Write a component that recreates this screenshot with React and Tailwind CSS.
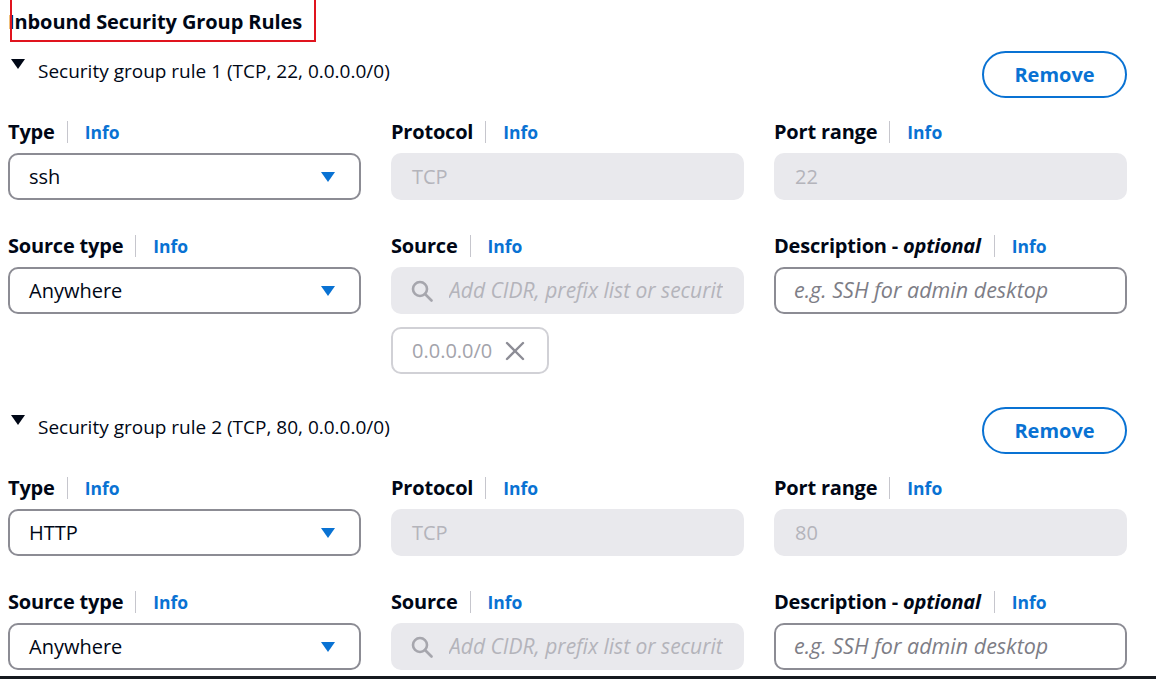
import React from 'react';

const Label = ({ children }) => (
  <div className="flex items-center h-[24px]">
    <span className="text-[20px] font-bold text-[#000716] leading-[24px] tracking-[-0.2px]">{children}</span>
    <span className="ml-[12px] mr-[17px] h-[22px] w-px bg-[#c6c6cd]"></span>
    <span className="text-[17.5px] font-bold text-[#0972d3]">Info</span>
  </div>
);

const Caret = () => (
  <svg width="14" height="10" viewBox="0 0 14 10" className="shrink-0">
    <path d="M0 0h14L7 10z" fill="#0972d3" />
  </svg>
);

const SelectBox = ({ value }) => (
  <div className="mt-[9px] h-[47px] rounded-[10px] border-2 border-[#8c8c94] bg-white flex items-center justify-between pl-[19px] pr-[24px]">
    <span className="text-[20px] text-[#000716]">{value}</span>
    <Caret />
  </div>
);

const DisabledBox = ({ value }) => (
  <div className="mt-[9px] h-[47px] rounded-[10px] bg-[#e9e9ed] flex items-center pl-[21px]">
    <span className="text-[20px] text-[#b4b4bb]">{value}</span>
  </div>
);

const SearchBox = () => (
  <div className="mt-[9px] h-[47px] rounded-[10px] bg-[#e9e9ed] flex items-center pl-[20px] pr-[14px]">
    <svg width="22" height="22" viewBox="0 0 22 22" className="shrink-0" fill="none" stroke="#a6a6ad" strokeWidth="2.6">
      <circle cx="9" cy="9" r="7" />
      <path d="M14 14l6.5 6.5" strokeLinecap="round" />
    </svg>
    <span className="ml-[16px] text-[21px] italic text-[#b4b4bb] whitespace-nowrap overflow-hidden">
      Add CIDR, prefix list or securit
    </span>
  </div>
);

const TextBox = () => (
  <div className="mt-[9px] h-[47px] rounded-[10px] border-2 border-[#8c8c94] bg-white flex items-center pl-[18px]">
    <span className="text-[21.5px] italic text-[#7d7d86]">e.g. SSH for admin desktop</span>
  </div>
);

const Rule = ({ n, type, port, chip, mt }) => (
  <div className={mt}>
    <div className="flex items-start justify-between w-[1119px]">
      <div className="flex items-start pt-[7px]">
        <svg width="14" height="10" viewBox="0 0 14 10" className="ml-[3px] mt-[1px]">
          <path d="M0 0h14L7 10z" fill="#000716" />
        </svg>
        <span className="ml-[13px] text-[19px] leading-[26px] text-[#000716]">
          Security group rule {n} (TCP, {port}, 0.0.0.0/0)
        </span>
      </div>
      <button className="w-[145px] h-[47px] rounded-full border-2 border-[#0972d3] text-[#0972d3] text-[20px] font-bold bg-white">
        Remove
      </button>
    </div>

    <div className="grid grid-cols-[353px_353px_353px] gap-x-[30px] mt-[22px]">
      <div>
        <Label>Type</Label>
        <SelectBox value={type} />
      </div>
      <div>
        <Label>Protocol</Label>
        <DisabledBox value="TCP" />
      </div>
      <div>
        <Label>Port range</Label>
        <DisabledBox value={port} />
      </div>
    </div>

    <div className="grid grid-cols-[353px_353px_353px] gap-x-[30px] mt-[34px]">
      <div>
        <Label>Source type</Label>
        <SelectBox value="Anywhere" />
      </div>
      <div>
        <Label>Source</Label>
        <SearchBox />
        {chip && (
          <div className="mt-[13px] w-[158px] h-[47px] rounded-[10px] border-2 border-[#d1d1d6] flex items-center pl-[19px]">
            <span className="text-[20px] text-[#a3a3ab]">0.0.0.0/0</span>
            <svg width="20" height="20" viewBox="0 0 20 20" className="ml-[13px]" stroke="#8d8d96" strokeWidth="2.4" strokeLinecap="round">
              <path d="M2 2l16 16M18 2L2 18" />
            </svg>
          </div>
        )}
      </div>
      <div>
        <div className="flex items-center h-[24px]">
          <span className="text-[20px] font-bold text-[#000716] tracking-[-0.2px]">
            Description - <i>optional</i>
          </span>
          <span className="ml-[13px] mr-[17px] h-[22px] w-px bg-[#c6c6cd]"></span>
          <span className="text-[17.5px] font-bold text-[#0972d3]">Info</span>
        </div>
        <TextBox />
      </div>
    </div>
  </div>
);

export default function App() {
  return (
    <div className="h-[679px] overflow-hidden bg-white flex flex-col" style={{ fontFamily: '"Open Sans", "Noto Sans", sans-serif' }}>
      <div className="relative pl-[8px] flex-1">
        <div className="absolute left-[10px] top-[-10px] w-[306px] h-[52px] border-2 border-[#e0141e]"></div>
        <h2 className="pt-[9px] text-[20px] font-bold text-[#000716] leading-[26px] tracking-[-0.1px]">
          Inbound Security Group Rules
        </h2>
        <Rule n={1} type="ssh" port="22" chip mt="mt-[16px]" />
        <Rule n={2} type="HTTP" port="80" mt="mt-[33px]" />
      </div>
      <div className="h-[3px] bg-[#16191f]"></div>
    </div>
  );
}
